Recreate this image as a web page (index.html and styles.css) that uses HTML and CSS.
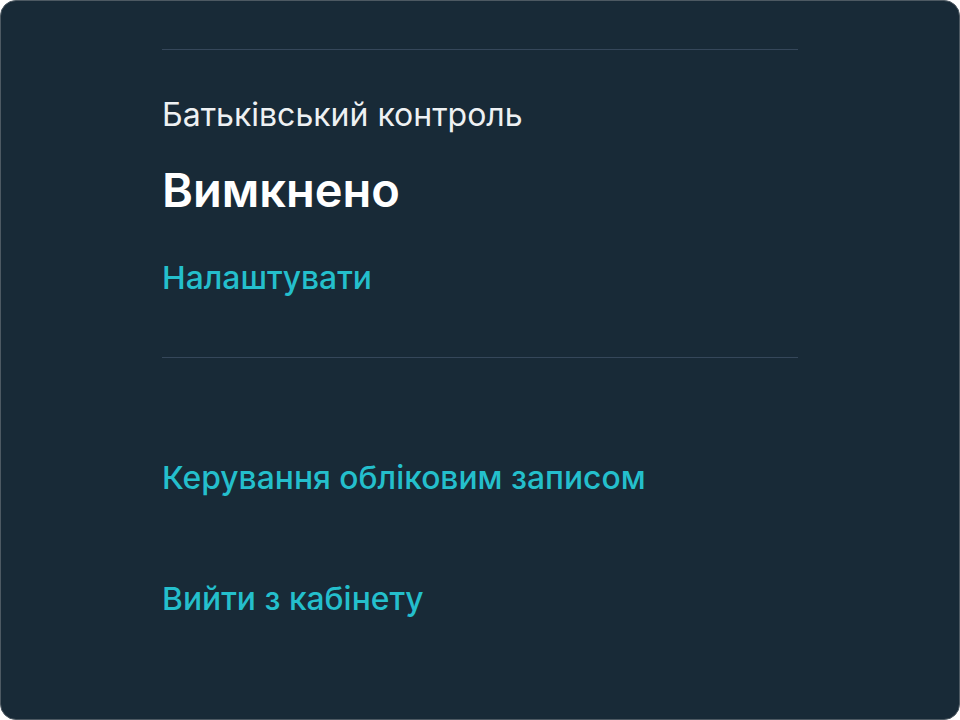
FILE: index.html
```
<!DOCTYPE html>
<html lang="uk">
<head>
    <meta charset="UTF-8">
    <meta name="viewport" content="width=device-width, initial-scale=1.0">
    <title>Кабінет</title>
    <link rel="stylesheet" href="styles.css">
</head>
<body>
    <div class="panel">
        <div class="menu">
            <!-- батьківський контроль -->
            <div class="section parental">
                <div class="section-label">Батьківський контроль</div>
                <div class="section-status">Вимкнено</div>
                <a class="link setup" href="#">Налаштувати</a>
            </div>
            <!-- акаунт -->
            <div class="section account">
                <a class="link manage" href="#">Керування обліковим записом</a>
                <a class="link logout" href="#">Вийти з кабінету</a>
            </div>
        </div>
    </div>
</body>
</html>
```

FILE: styles.css
```
html,
body {
    height: 100%;
}
body {
    margin: 0;
    background-color: #ffffff;
    font-family: Inter, "Noto Sans", sans-serif;
}
.panel {
    box-sizing: border-box;
    height: 100%;
    padding-top: 48px;
    background-color: #182a37;
    border: 1.5px solid #4d5962;
    border-radius: 16px;
}
.menu {
    width: 636px;
    margin-left: 161px;
}
.section {
    display: flex;
    flex-direction: column;
    align-items: flex-start;
    border-top: 1px solid #35475a;
}
.parental {
    padding: 46px 0 60px;
}
.section-label {
    font-size: 32px;
    line-height: 38px;
    color: #eef1f3;
}
.section-status {
    margin-top: 28px;
    font-size: 47px;
    line-height: 56px;
    font-weight: 600;
    color: #ffffff;
}
.link {
    font-size: 31.8px;
    line-height: 38px;
    font-weight: 500;
    color: #24bfcc;
    text-decoration: none;
}
.setup {
    margin-top: 41px;
}
.manage {
    margin-top: 101px;
}
.logout {
    margin-top: 83px;
}
```
